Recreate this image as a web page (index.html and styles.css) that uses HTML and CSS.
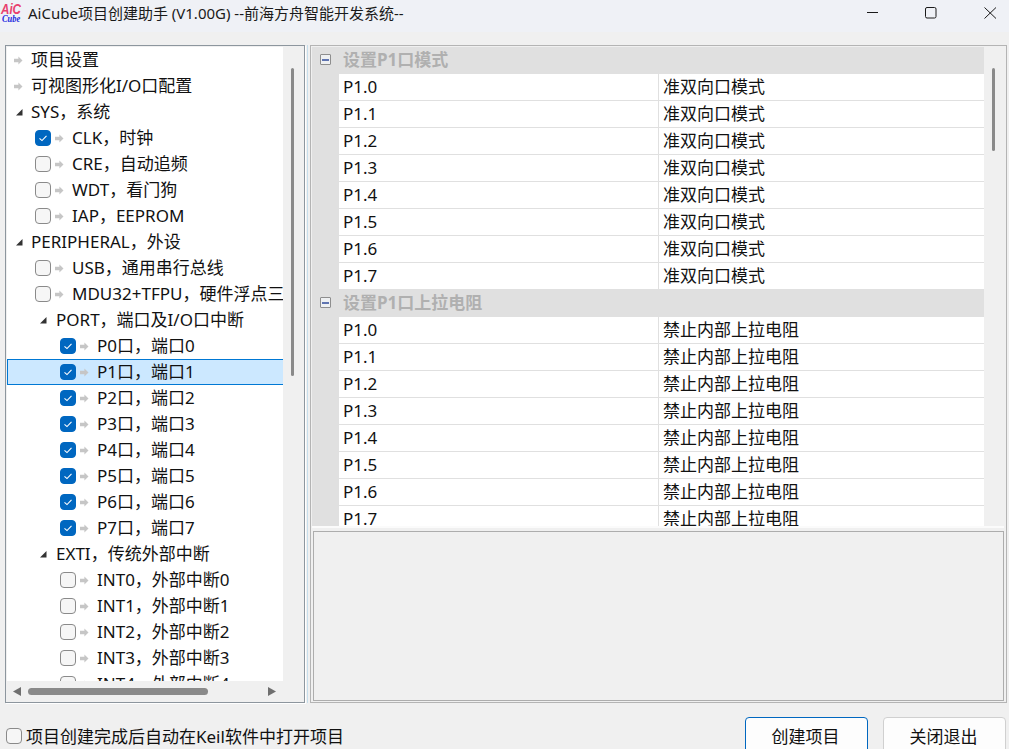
FILE: index.html
```html
<!DOCTYPE html>
<html lang="zh-CN">
<head>
<meta charset="utf-8">
<title>AiCube</title>
<link rel="stylesheet" href="styles.css">
</head>
<body>
<div class="window">
  <header class="titlebar">
    <div class="logo"><span class="logo-top">AiC</span><span class="logo-bottom">Cube</span></div>
    <div class="title">AiCube项目创建助手 (V1.00G) --前海方舟智能开发系统--</div>
    <div class="winbtns">
      <svg class="winbtn" width="58" height="32" viewBox="0 0 58 32"><path d="M23 12.5H34" stroke="#1a1a1a" stroke-width="1"/></svg>
      <svg class="winbtn" width="58" height="32" viewBox="0 0 58 32"><rect x="23.5" y="7.5" width="10.5" height="10.5" rx="1.5" fill="none" stroke="#1a1a1a" stroke-width="1"/></svg>
      <svg class="winbtn" width="49" height="32" viewBox="0 0 49 32"><path d="M24.5 7.5L36 18.5M36 7.5L24.5 18.5" stroke="#1a1a1a" stroke-width="1"/></svg>
    </div>
  </header>

  <main class="main">
    <section class="treepanel">
      <div class="tree-top">
        <div class="tree">
          <div class="row l0"><svg class="arrow" viewBox="0 0 9 9"><path d="M0 2.8H4.4V.5L8.5 4.5 4.4 8.5V6.2H0Z"/></svg><span>项目设置</span></div>
          <div class="row l0"><svg class="arrow" viewBox="0 0 9 9"><path d="M0 2.8H4.4V.5L8.5 4.5 4.4 8.5V6.2H0Z"/></svg><span>可视图形化I/O口配置</span></div>
          <div class="row l0e"><svg class="tri" viewBox="0 0 7 7"><path d="M0 6.5H6.5V0Z"/></svg><span>SYS，系统</span></div>
          <div class="row l1"><i class="cb on"><svg viewBox="0 0 16 16"><path d="M4.5 8.3L7 10.6 11.5 5.8" fill="none" stroke="#fff" stroke-width="1.1"/></svg></i><svg class="arrow" viewBox="0 0 9 9"><path d="M0 2.8H4.4V.5L8.5 4.5 4.4 8.5V6.2H0Z"/></svg><span>CLK，时钟</span></div>
          <div class="row l1"><i class="cb"></i><svg class="arrow" viewBox="0 0 9 9"><path d="M0 2.8H4.4V.5L8.5 4.5 4.4 8.5V6.2H0Z"/></svg><span>CRE，自动追频</span></div>
          <div class="row l1"><i class="cb"></i><svg class="arrow" viewBox="0 0 9 9"><path d="M0 2.8H4.4V.5L8.5 4.5 4.4 8.5V6.2H0Z"/></svg><span>WDT，看门狗</span></div>
          <div class="row l1"><i class="cb"></i><svg class="arrow" viewBox="0 0 9 9"><path d="M0 2.8H4.4V.5L8.5 4.5 4.4 8.5V6.2H0Z"/></svg><span>IAP，EEPROM</span></div>
          <div class="row l0e"><svg class="tri" viewBox="0 0 7 7"><path d="M0 6.5H6.5V0Z"/></svg><span>PERIPHERAL，外设</span></div>
          <div class="row l1"><i class="cb"></i><svg class="arrow" viewBox="0 0 9 9"><path d="M0 2.8H4.4V.5L8.5 4.5 4.4 8.5V6.2H0Z"/></svg><span>USB，通用串行总线</span></div>
          <div class="row l1"><i class="cb"></i><svg class="arrow" viewBox="0 0 9 9"><path d="M0 2.8H4.4V.5L8.5 4.5 4.4 8.5V6.2H0Z"/></svg><span>MDU32+TFPU，硬件浮点三角函数单元</span></div>
          <div class="row l1e"><svg class="tri" viewBox="0 0 7 7"><path d="M0 6.5H6.5V0Z"/></svg><span>PORT，端口及I/O口中断</span></div>
          <div class="row l2"><i class="cb on"><svg viewBox="0 0 16 16"><path d="M4.5 8.3L7 10.6 11.5 5.8" fill="none" stroke="#fff" stroke-width="1.1"/></svg></i><svg class="arrow" viewBox="0 0 9 9"><path d="M0 2.8H4.4V.5L8.5 4.5 4.4 8.5V6.2H0Z"/></svg><span>P0口，端口0</span></div>
          <div class="row l2 sel"><i class="cb on"><svg viewBox="0 0 16 16"><path d="M4.5 8.3L7 10.6 11.5 5.8" fill="none" stroke="#fff" stroke-width="1.1"/></svg></i><svg class="arrow" viewBox="0 0 9 9"><path d="M0 2.8H4.4V.5L8.5 4.5 4.4 8.5V6.2H0Z"/></svg><span>P1口，端口1</span></div>
          <div class="row l2"><i class="cb on"><svg viewBox="0 0 16 16"><path d="M4.5 8.3L7 10.6 11.5 5.8" fill="none" stroke="#fff" stroke-width="1.1"/></svg></i><svg class="arrow" viewBox="0 0 9 9"><path d="M0 2.8H4.4V.5L8.5 4.5 4.4 8.5V6.2H0Z"/></svg><span>P2口，端口2</span></div>
          <div class="row l2"><i class="cb on"><svg viewBox="0 0 16 16"><path d="M4.5 8.3L7 10.6 11.5 5.8" fill="none" stroke="#fff" stroke-width="1.1"/></svg></i><svg class="arrow" viewBox="0 0 9 9"><path d="M0 2.8H4.4V.5L8.5 4.5 4.4 8.5V6.2H0Z"/></svg><span>P3口，端口3</span></div>
          <div class="row l2"><i class="cb on"><svg viewBox="0 0 16 16"><path d="M4.5 8.3L7 10.6 11.5 5.8" fill="none" stroke="#fff" stroke-width="1.1"/></svg></i><svg class="arrow" viewBox="0 0 9 9"><path d="M0 2.8H4.4V.5L8.5 4.5 4.4 8.5V6.2H0Z"/></svg><span>P4口，端口4</span></div>
          <div class="row l2"><i class="cb on"><svg viewBox="0 0 16 16"><path d="M4.5 8.3L7 10.6 11.5 5.8" fill="none" stroke="#fff" stroke-width="1.1"/></svg></i><svg class="arrow" viewBox="0 0 9 9"><path d="M0 2.8H4.4V.5L8.5 4.5 4.4 8.5V6.2H0Z"/></svg><span>P5口，端口5</span></div>
          <div class="row l2"><i class="cb on"><svg viewBox="0 0 16 16"><path d="M4.5 8.3L7 10.6 11.5 5.8" fill="none" stroke="#fff" stroke-width="1.1"/></svg></i><svg class="arrow" viewBox="0 0 9 9"><path d="M0 2.8H4.4V.5L8.5 4.5 4.4 8.5V6.2H0Z"/></svg><span>P6口，端口6</span></div>
          <div class="row l2"><i class="cb on"><svg viewBox="0 0 16 16"><path d="M4.5 8.3L7 10.6 11.5 5.8" fill="none" stroke="#fff" stroke-width="1.1"/></svg></i><svg class="arrow" viewBox="0 0 9 9"><path d="M0 2.8H4.4V.5L8.5 4.5 4.4 8.5V6.2H0Z"/></svg><span>P7口，端口7</span></div>
          <div class="row l1e"><svg class="tri" viewBox="0 0 7 7"><path d="M0 6.5H6.5V0Z"/></svg><span>EXTI，传统外部中断</span></div>
          <div class="row l2"><i class="cb"></i><svg class="arrow" viewBox="0 0 9 9"><path d="M0 2.8H4.4V.5L8.5 4.5 4.4 8.5V6.2H0Z"/></svg><span>INT0，外部中断0</span></div>
          <div class="row l2"><i class="cb"></i><svg class="arrow" viewBox="0 0 9 9"><path d="M0 2.8H4.4V.5L8.5 4.5 4.4 8.5V6.2H0Z"/></svg><span>INT1，外部中断1</span></div>
          <div class="row l2"><i class="cb"></i><svg class="arrow" viewBox="0 0 9 9"><path d="M0 2.8H4.4V.5L8.5 4.5 4.4 8.5V6.2H0Z"/></svg><span>INT2，外部中断2</span></div>
          <div class="row l2"><i class="cb"></i><svg class="arrow" viewBox="0 0 9 9"><path d="M0 2.8H4.4V.5L8.5 4.5 4.4 8.5V6.2H0Z"/></svg><span>INT3，外部中断3</span></div>
          <div class="row l2"><i class="cb"></i><svg class="arrow" viewBox="0 0 9 9"><path d="M0 2.8H4.4V.5L8.5 4.5 4.4 8.5V6.2H0Z"/></svg><span>INT4，外部中断4</span></div>
        </div>
        <div class="vtrack tree-vtrack"><div class="vthumb tree-vthumb"></div></div>
      </div>
      <div class="htrack">
        <svg class="harrow" viewBox="0 0 8 9"><path d="M8 0V9L0 4.5Z"/></svg>
        <div class="hthumb-lane"><div class="hthumb"></div></div>
        <svg class="harrow" viewBox="0 0 8 9"><path d="M0 0V9L8 4.5Z"/></svg>
      </div>
    </section>

    <div class="splitter"></div>

    <section class="proppanel">
      <div class="prop-top">
        <div class="grid">
          <div class="ghead"><i class="minus"></i><span>设置P1口模式</span></div>
          <div class="grow"><div class="gname">P1.0</div><div class="gval">准双向口模式</div></div>
          <div class="grow"><div class="gname">P1.1</div><div class="gval">准双向口模式</div></div>
          <div class="grow"><div class="gname">P1.2</div><div class="gval">准双向口模式</div></div>
          <div class="grow"><div class="gname">P1.3</div><div class="gval">准双向口模式</div></div>
          <div class="grow"><div class="gname">P1.4</div><div class="gval">准双向口模式</div></div>
          <div class="grow"><div class="gname">P1.5</div><div class="gval">准双向口模式</div></div>
          <div class="grow"><div class="gname">P1.6</div><div class="gval">准双向口模式</div></div>
          <div class="grow"><div class="gname">P1.7</div><div class="gval">准双向口模式</div></div>
          <div class="ghead"><i class="minus"></i><span>设置P1口上拉电阻</span></div>
          <div class="grow"><div class="gname">P1.0</div><div class="gval">禁止内部上拉电阻</div></div>
          <div class="grow"><div class="gname">P1.1</div><div class="gval">禁止内部上拉电阻</div></div>
          <div class="grow"><div class="gname">P1.2</div><div class="gval">禁止内部上拉电阻</div></div>
          <div class="grow"><div class="gname">P1.3</div><div class="gval">禁止内部上拉电阻</div></div>
          <div class="grow"><div class="gname">P1.4</div><div class="gval">禁止内部上拉电阻</div></div>
          <div class="grow"><div class="gname">P1.5</div><div class="gval">禁止内部上拉电阻</div></div>
          <div class="grow"><div class="gname">P1.6</div><div class="gval">禁止内部上拉电阻</div></div>
          <div class="grow"><div class="gname">P1.7</div><div class="gval">禁止内部上拉电阻</div></div>
        </div>
        <div class="vtrack prop-vtrack"><div class="vthumb prop-vthumb"></div></div>
      </div>
      <div class="strip"></div>
      <div class="desc"></div>
    </section>
  </main>

  <footer class="footer">
    <label class="autoopen"><i class="cb"></i><span>项目创建完成后自动在Keil软件中打开项目</span></label>
    <button class="btn primary">创建项目</button>
    <button class="btn">关闭退出</button>
  </footer>
</div>
</body>
</html>
```
FILE: styles.css
```css
* { box-sizing: border-box; }
html, body { margin: 0; padding: 0; height: 749px; overflow: hidden; }
body { background: #f0f0f0; color: #111; font-family: "Noto Sans", "Noto Sans CJK SC", sans-serif; font-size: 17px; }
.window { width: 1009px; height: 749px; display: flex; flex-direction: column; overflow: hidden; }

.titlebar { height: 32px; flex: none; background: #eff1f6; display: flex; align-items: center; }
.logo { width: 24px; margin-left: 1px; display: flex; flex-direction: column; align-items: flex-start; padding-bottom: 6px; font-style: italic; font-weight: bold; }
.logo-top { display: block; color: #e8406e; font-size: 14px; line-height: 11px; font-family: "Liberation Sans", sans-serif; transform: scaleX(.83); transform-origin: left center; }
.logo-bottom { display: block; color: #2028e0; font-size: 10.5px; line-height: 8px; margin-left: 1px; font-family: "Liberation Serif", serif; transform: scaleX(.8); transform-origin: left center; }
.title { flex: 1; margin-left: 3px; padding-bottom: 6px; font-size: 15px; line-height: 20px; white-space: nowrap; color: #1a1a1a; }
.winbtns { display: flex; width: 165px; flex: none; }
.winbtn { display: block; flex: none; }

.main { height: 671px; flex: none; display: flex; padding: 13px 2px 0 5px; }
.treepanel { width: 300px; height: 658px; flex: none; border: 1px solid #8d969e; box-shadow: 1px 1px 0 #fff; padding: 1px 0 0 1px; display: flex; flex-direction: column; }
.splitter { width: 5px; flex: none; padding-left: 2px; }
.splitter::before { content: ""; display: block; width: 1px; height: 658px; background: #c6deec; }
.tree-top { height: 634px; flex: none; display: flex; }
.tree { width: 276px; flex: none; background: #fff; overflow: hidden; }
.row { height: 26px; display: flex; align-items: center; white-space: nowrap; line-height: 26px; }
.arrow { width: 9px; height: 9px; flex: none; fill: #c6c6c6; }
.tri { width: 7px; height: 7px; flex: none; fill: #333; }
.l0 { padding-left: 7px; }
.l0 span { margin-left: 8px; }
.l0e { padding-left: 9px; }
.l0e span { margin-left: 8px; }
.l1 { padding-left: 28px; }
.l1 .arrow { margin-left: 4px; }
.l1 span { margin-left: 8px; }
.l1e { padding-left: 33px; }
.l1e span { margin-left: 9px; }
.l2 { padding-left: 53px; }
.l2 .arrow { margin-left: 4px; }
.l2 span { margin-left: 8px; }
.sel { background: #cce8ff; border: 1px solid #0078d4; border-right: 0; padding-left: 52px; }

.cb { display: block; width: 16px; height: 16px; flex: none; border-radius: 4px; background: #f6f6f6; border: 1px solid #8a8a8a; }
.cb.on { background: #0067c0; border-color: #0067c0; }
.cb.on svg { display: block; width: 16px; height: 16px; margin: -1px; }

.vtrack { flex: 1; display: flex; justify-content: center; }
.vthumb { width: 3px; background: #8a8a8a; border-radius: 2px; }
.tree-vtrack { padding-top: 21px; padding-right: 2px; }
.tree-vthumb { height: 308px; }
.prop-vtrack { padding-top: 21px; padding-right: 3px; }
.prop-vthumb { height: 83px; }

.htrack { height: 21px; flex: none; display: flex; align-items: center; padding: 0 28px 0 6px; }
.harrow { width: 8px; height: 9px; flex: none; fill: #6f6f6f; }
.hthumb-lane { flex: 1; padding-left: 7px; }
.hthumb { width: 180px; height: 7px; background: #8a8a8a; border-radius: 4px; }

.proppanel { width: 697px; height: 658px; flex: none; border: 1px solid #b4b4b4; padding: 1px; display: flex; flex-direction: column; }
.prop-top { height: 479px; flex: none; display: flex; overflow: hidden; }
.grid { width: 672px; flex: none; background: #e0e0e0; overflow: hidden; }
.ghead { height: 27px; display: flex; align-items: center; color: #b0b0b0; font-weight: bold; font-size: 17px; padding: 0 0 2px 8px; }
.ghead span { margin: 0 0 2px 12px; }
.minus { display: block; width: 11px; height: 11px; flex: none; border: 1px solid #8e8e8e; border-radius: 1px; background: linear-gradient(#5f74b0, #5f74b0) center / 7px 2px no-repeat #eef0f2; }
.grow { height: 27px; margin-left: 27px; background: #fff; display: flex; border-bottom: 1px solid #e0e0e0; line-height: 26px; }
.gname { width: 320px; flex: none; padding-left: 4px; border-right: 1px solid #e0e0e0; }
.gval { flex: 1; padding-left: 4px; }
.strip { height: 2px; flex: none; margin-right: 1px; background: #fbfbfb; }
.desc { margin: 3px 1px 0; height: 170px; flex: none; border: 1px solid #adadad; background: #f0f0f0; }

.footer { height: 46px; flex: none; display: flex; align-items: flex-start; padding: 14px 3px 0 6px; gap: 15px; overflow: hidden; }
.autoopen { flex: 1; display: flex; align-items: center; height: 38px; gap: 5px; }
.autoopen span { margin: 0 0 2px -1px; }
.btn { width: 123px; height: 38px; flex: none; font: inherit; color: #111; background: #fdfdfd; border: 1px solid #d0d0d0; border-radius: 4px; padding: 0 2px 2px 0; }
.primary { border-color: #0067c0; }
```
